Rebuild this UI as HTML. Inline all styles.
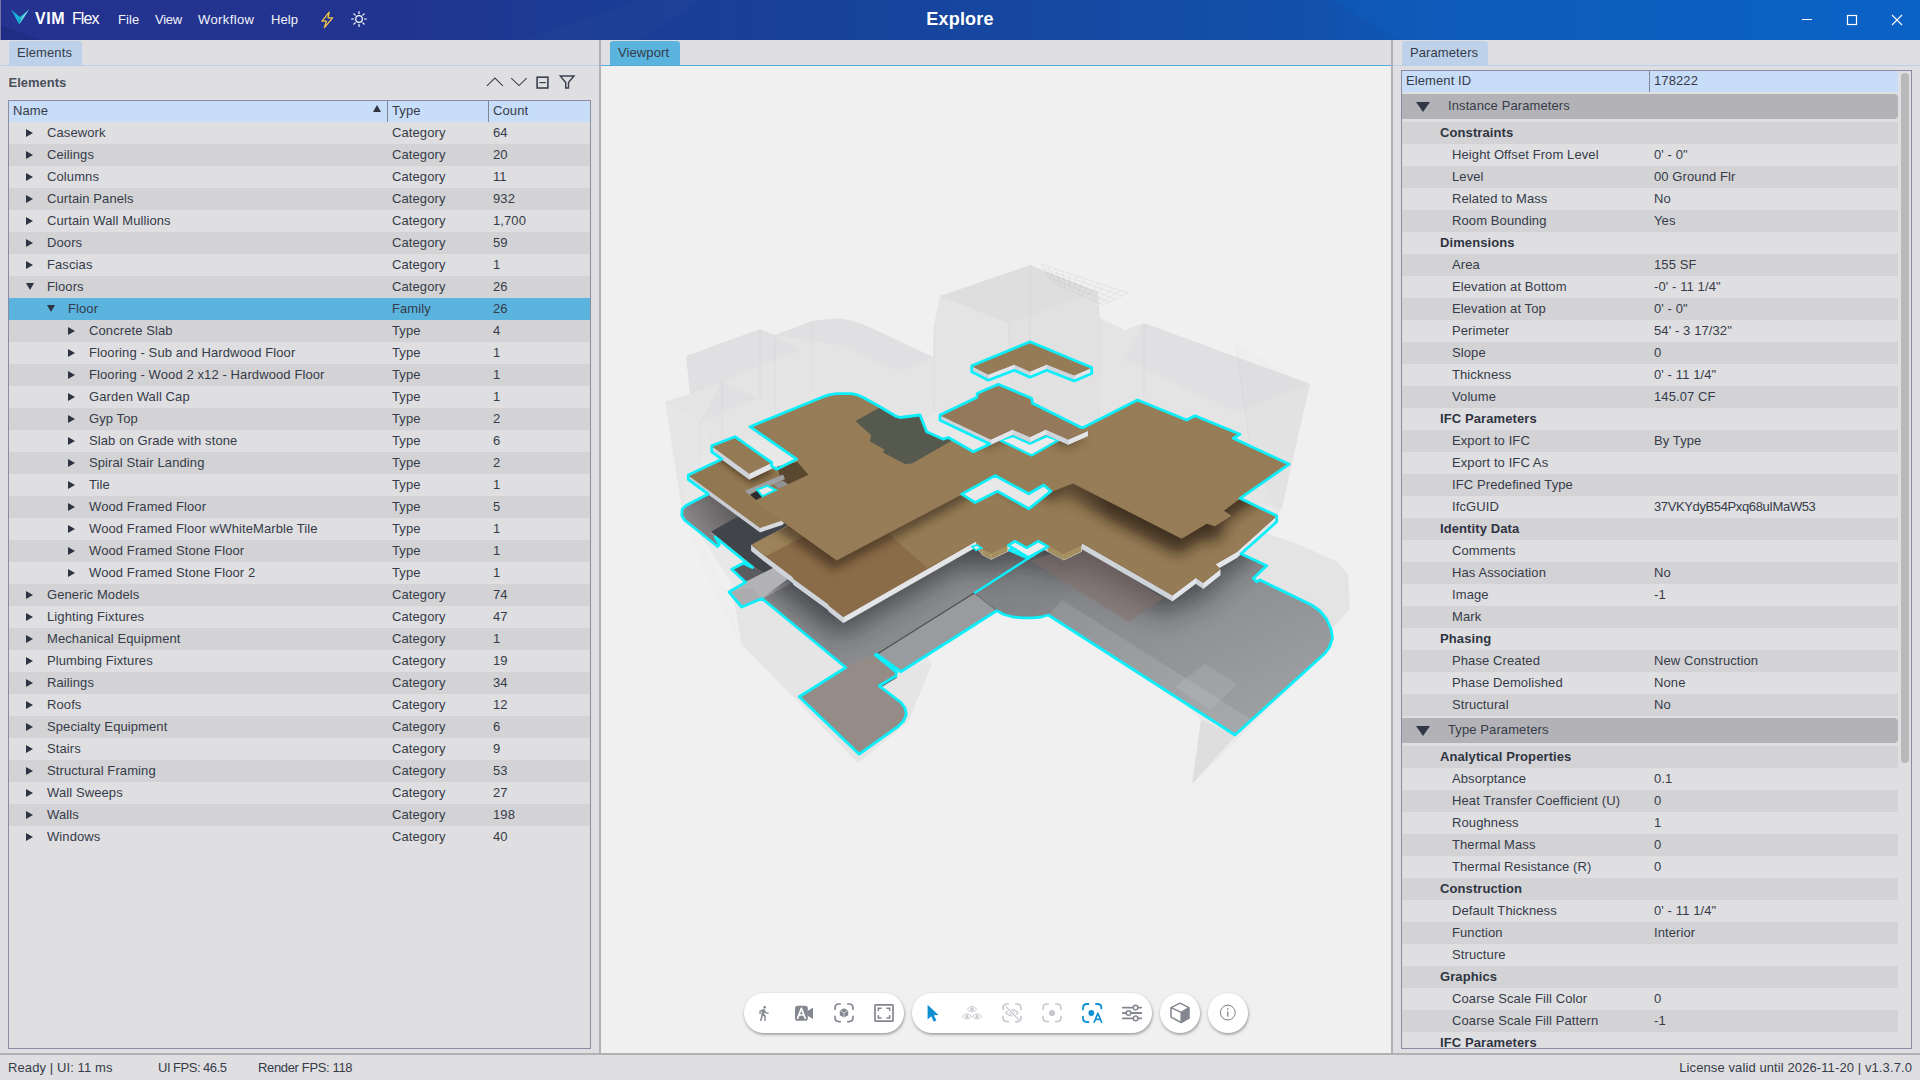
<!DOCTYPE html>
<html><head><meta charset="utf-8"><title>VIM Flex - Explore</title>
<style>
*{box-sizing:border-box;margin:0;padding:0}
html,body{width:1920px;height:1080px;overflow:hidden}
body{position:relative;background:#dfdfe1;font-family:"Liberation Sans",sans-serif;font-size:13px;color:#363b49;letter-spacing:.1px}
span{position:absolute;white-space:pre}
i,b{position:absolute;display:block}
/* title bar */
#titlebar{position:absolute;left:0;top:0;width:1920px;height:40px;overflow:hidden;background:linear-gradient(90deg,#25328f 0%,#21348f 20%,#1b3c95 31%,#17449c 47%,#154aa3 57%,#1250ab 68%,#0f58b6 74%,#0b62c5 100%);color:#fff}
#titlebar svg{position:absolute}
#titlebar .m{top:12px;font-size:13px;line-height:16px;color:#f2f4fb}
#titlebar .ttl{left:860px;width:200px;text-align:center;top:8px;font-size:18px;line-height:22px;font-weight:700;letter-spacing:.2px}
#titlebar .brand{top:8.5px;font-size:16px;line-height:20px}
/* panels */
#left{position:absolute;left:0;top:40px;width:599px;height:1013px}
#view{position:absolute;left:601px;top:40px;width:790px;height:1013px}
#right{position:absolute;left:1393px;top:40px;width:527px;height:1013px}
.split{position:absolute;top:40px;width:2px;height:1013px;background:#b0b0b5}
.tab{position:absolute;top:1px;height:24px;border-radius:3px 3px 0 0}
.tab span{top:0;line-height:23px}
.tabL{background:#bdd2ea}
.tabV{background:#5ab4de}
.tabline{position:absolute;top:25px;height:1px}
.ptitle{position:absolute;left:8.5px;top:33px;letter-spacing:0;font-weight:700;font-size:13px;line-height:20px;color:#4b505d}
/* tree */
#tree{position:absolute;left:8px;top:60px;width:583px;height:949px;border:1px solid #8b8ba4;overflow:hidden;background:#dfdfe1}
.thead{position:absolute;left:0;top:0;width:581px;height:21px;background:#c8ddf8}
.th{position:absolute;top:0;height:21px}
.th span{left:4px;top:0;line-height:20px}
.th b{left:0;top:0;width:1px;height:21px;background:#7f8595}
.sortarrow{right:6px;top:4px;width:0;height:0;border-left:4.5px solid transparent;border-right:4.5px solid transparent;border-bottom:7px solid #2f3442}
.tr{position:absolute;left:0;width:581px;height:22px}
.tr span{top:0;line-height:22px}
.tr.odd,.pr.odd{background:#d3d3d5}
.tr.sel{background:#5ab4de}
.c1{left:383px}.c2{left:484px}
.ar{top:6px;width:0;height:0}
.ar.cl{border-top:4.5px solid transparent;border-bottom:4.5px solid transparent;border-left:7.5px solid #2f3442;margin-top:.5px;margin-left:1px}
.ar.op{border-left:4.2px solid transparent;border-right:4.2px solid transparent;border-top:7.4px solid #2f3442;margin-top:1.2px;margin-left:1px}
/* viewport */
#canvas{position:absolute;left:0;top:26px;width:790px;height:987px;background:#f0f0f0;overflow:hidden}
#canvas svg.model{position:absolute;left:0;top:0}
.tbg{position:absolute;top:927px;height:40px;border-radius:20px;background:#fff;box-shadow:.5px 1.5px 3px rgba(60,60,70,.5)}
.tbg svg{position:absolute;top:0}
/* params */
#params{position:absolute;left:8px;top:30px;width:511px;height:979px;border:1px solid #8b8ba4;overflow:hidden;background:#dfdfe1}
.phead{position:absolute;left:0;top:0;width:496px;height:21px;background:#c8ddf8}
.phead span{top:0;line-height:20px}
.phead b{left:247px;top:0;width:1px;height:21px;background:#7f8595}
.sec{position:absolute;left:0;width:496px;height:25px;background:#b3b3b7;border-radius:0 4px 4px 0}
.sec span{left:46px;top:0;line-height:24px}
.tri{left:14px;top:8px;width:0;height:0;border-left:7px solid transparent;border-right:7px solid transparent;border-top:10.5px solid #333846}
.pr{position:absolute;left:0;width:496px;height:22px}
.pr span{top:0;line-height:22px}
.pr .g{left:38px;font-weight:700;color:#2f3442}
.pr .k{left:50px}
.pr .v{left:252px}
.sbar{position:absolute;left:499px;top:0;width:10px;height:977px}
.thumb{position:absolute;left:.4px;top:2px;width:7.8px;height:690px;border-radius:4px;background:#b9b9ba}
/* status */
#status{position:absolute;left:0;top:1053px;width:1920px;height:27px;border-top:2px solid #b0b0b5;background:#dfdfe1}
#status span{top:0;line-height:25px}


</style></head>
<body>
<div id="titlebar">
<svg width="1920" height="40" style="left:0;top:0"><polygon points="0,25 40,40 0,40" fill="#1b2a7e" opacity=".55"/><polygon points="520,40 640,0 700,0 640,40" fill="#ffffff" opacity=".015"/><polygon points="1330,0 1920,0 1920,40 1400,40" fill="#0a63c9" opacity=".25"/><rect x="0" y="0" width="1" height="40" fill="#7476a4"/></svg>
<svg width="20" height="17" viewBox="0 0 20 17" style="left:10px;top:9px"><defs><linearGradient id="lg1" x1="0" y1="0" x2="1" y2="1"><stop offset="0" stop-color="#1ba3d9"/><stop offset="1" stop-color="#0fc0d8"/></linearGradient><linearGradient id="lg2" x1="1" y1="0" x2="0" y2="1"><stop offset="0" stop-color="#e8fbfb"/><stop offset="1" stop-color="#37c9c4"/></linearGradient></defs><polygon points="1,0.5 10,8 9.3,15.5" fill="url(#lg1)"/><polygon points="19,0.5 10,8 9.3,15.5" fill="#1fb5cf"/><polygon points="19,0.5 12,8 9.3,15.5" fill="url(#lg2)" opacity=".85"/></svg>
<span class="brand" style="left:35px;font-weight:700;letter-spacing:.6px">VIM</span><span class="brand" style="left:72px;letter-spacing:-.9px">Flex</span>
<span class="m" style="left:118px">File</span><span class="m" style="left:155px;letter-spacing:-.25px">View</span><span class="m" style="left:198px;letter-spacing:.4px">Workflow</span><span class="m" style="left:271px">Help</span>
<svg width="16" height="18" viewBox="0 0 16 18" style="left:319px;top:11px"><path d="M10.2 1.2 L3 10.2 H7.4 L5.4 16.6 L13.6 6.8 H9 Z" fill="none" stroke="#f3c546" stroke-width="1.3" stroke-linejoin="round"/></svg>
<svg width="18" height="18" viewBox="0 0 18 18" style="left:349.5px;top:10.3px"><g stroke="#fff" stroke-width="1.2" fill="none" stroke-linecap="round"><circle cx="9" cy="9" r="3.3"/><path d="M9 1.6V3.6M9 14.4V16.4M1.6 9H3.6M14.4 9H16.4M3.8 3.8L5.2 5.2M12.8 12.8L14.2 14.2M3.8 14.2L5.2 12.8M12.8 5.2L14.2 3.8"/></g></svg>
<svg width="130" height="40" style="left:1790px;top:0"><g stroke="#fff" stroke-width="1" fill="none"><path d="M12 19.5H22"/><rect x="57.5" y="15.5" width="9" height="9" stroke-width="1.2"/><path d="M102 15L112 25M112 15L102 25" stroke-width="1.1"/></g></svg>
<span class="ttl">Explore</span>
</div>
<div id="left">
<div class="tab tabL" style="left:9px;width:73px"><span style="left:8px">Elements</span></div>
<div class="tabline" style="left:0;width:599px;background:#b9d0ec"></div>
<div class="ptitle">Elements</div>
<svg width="100" height="24" style="position:absolute;left:482px;top:30px"><g stroke="#3b404e" fill="none" stroke-linejoin="miter"><path d="M4.9 15.9L12.9 8.1L20.9 15.9" stroke-width="1.05"/><path d="M29.2 8.2L37 15.6L44.7 8.2" stroke-width="1.05"/><rect x="55.1" y="7.2" width="10.8" height="10.8" stroke-width="1.6"/><path d="M57.3 12.6H63.9" stroke-width="1.2"/><path d="M78.3 5.9H92L86.5 12.5V18H83.7V12.5Z" stroke-width="1.45"/></g></svg>

<div id="tree">
<div class="thead"><div class="th" style="left:0;width:378px"><span>Name</span><i class="sortarrow"></i></div><div class="th" style="left:378px;width:101px"><b></b><span style="left:5px">Type</span></div><div class="th" style="left:479px;width:102px"><b></b><span style="left:5px">Count</span></div></div>
<div class="tr even" style="top:21px"><i class="ar cl" style="left:16px"></i><span class="c0" style="left:38px">Casework</span><span class="c1">Category</span><span class="c2">64</span></div>
<div class="tr odd" style="top:43px"><i class="ar cl" style="left:16px"></i><span class="c0" style="left:38px">Ceilings</span><span class="c1">Category</span><span class="c2">20</span></div>
<div class="tr even" style="top:65px"><i class="ar cl" style="left:16px"></i><span class="c0" style="left:38px">Columns</span><span class="c1">Category</span><span class="c2">11</span></div>
<div class="tr odd" style="top:87px"><i class="ar cl" style="left:16px"></i><span class="c0" style="left:38px">Curtain Panels</span><span class="c1">Category</span><span class="c2">932</span></div>
<div class="tr even" style="top:109px"><i class="ar cl" style="left:16px"></i><span class="c0" style="left:38px">Curtain Wall Mullions</span><span class="c1">Category</span><span class="c2">1,700</span></div>
<div class="tr odd" style="top:131px"><i class="ar cl" style="left:16px"></i><span class="c0" style="left:38px">Doors</span><span class="c1">Category</span><span class="c2">59</span></div>
<div class="tr even" style="top:153px"><i class="ar cl" style="left:16px"></i><span class="c0" style="left:38px">Fascias</span><span class="c1">Category</span><span class="c2">1</span></div>
<div class="tr odd" style="top:175px"><i class="ar op" style="left:16px"></i><span class="c0" style="left:38px">Floors</span><span class="c1">Category</span><span class="c2">26</span></div>
<div class="tr sel" style="top:197px"><i class="ar op" style="left:37px"></i><span class="c0" style="left:59px">Floor</span><span class="c1">Family</span><span class="c2">26</span></div>
<div class="tr odd" style="top:219px"><i class="ar cl" style="left:58px"></i><span class="c0" style="left:80px">Concrete Slab</span><span class="c1">Type</span><span class="c2">4</span></div>
<div class="tr even" style="top:241px"><i class="ar cl" style="left:58px"></i><span class="c0" style="left:80px">Flooring - Sub and Hardwood Floor</span><span class="c1">Type</span><span class="c2">1</span></div>
<div class="tr odd" style="top:263px"><i class="ar cl" style="left:58px"></i><span class="c0" style="left:80px">Flooring - Wood 2 x12 - Hardwood Floor</span><span class="c1">Type</span><span class="c2">1</span></div>
<div class="tr even" style="top:285px"><i class="ar cl" style="left:58px"></i><span class="c0" style="left:80px">Garden Wall Cap</span><span class="c1">Type</span><span class="c2">1</span></div>
<div class="tr odd" style="top:307px"><i class="ar cl" style="left:58px"></i><span class="c0" style="left:80px">Gyp Top</span><span class="c1">Type</span><span class="c2">2</span></div>
<div class="tr even" style="top:329px"><i class="ar cl" style="left:58px"></i><span class="c0" style="left:80px">Slab on Grade with stone</span><span class="c1">Type</span><span class="c2">6</span></div>
<div class="tr odd" style="top:351px"><i class="ar cl" style="left:58px"></i><span class="c0" style="left:80px">Spiral Stair Landing</span><span class="c1">Type</span><span class="c2">2</span></div>
<div class="tr even" style="top:373px"><i class="ar cl" style="left:58px"></i><span class="c0" style="left:80px">Tile</span><span class="c1">Type</span><span class="c2">1</span></div>
<div class="tr odd" style="top:395px"><i class="ar cl" style="left:58px"></i><span class="c0" style="left:80px">Wood Framed Floor</span><span class="c1">Type</span><span class="c2">5</span></div>
<div class="tr even" style="top:417px"><i class="ar cl" style="left:58px"></i><span class="c0" style="left:80px">Wood Framed Floor wWhiteMarble Tile</span><span class="c1">Type</span><span class="c2">1</span></div>
<div class="tr odd" style="top:439px"><i class="ar cl" style="left:58px"></i><span class="c0" style="left:80px">Wood Framed Stone Floor</span><span class="c1">Type</span><span class="c2">1</span></div>
<div class="tr even" style="top:461px"><i class="ar cl" style="left:58px"></i><span class="c0" style="left:80px">Wood Framed Stone Floor 2</span><span class="c1">Type</span><span class="c2">1</span></div>
<div class="tr odd" style="top:483px"><i class="ar cl" style="left:16px"></i><span class="c0" style="left:38px">Generic Models</span><span class="c1">Category</span><span class="c2">74</span></div>
<div class="tr even" style="top:505px"><i class="ar cl" style="left:16px"></i><span class="c0" style="left:38px">Lighting Fixtures</span><span class="c1">Category</span><span class="c2">47</span></div>
<div class="tr odd" style="top:527px"><i class="ar cl" style="left:16px"></i><span class="c0" style="left:38px">Mechanical Equipment</span><span class="c1">Category</span><span class="c2">1</span></div>
<div class="tr even" style="top:549px"><i class="ar cl" style="left:16px"></i><span class="c0" style="left:38px">Plumbing Fixtures</span><span class="c1">Category</span><span class="c2">19</span></div>
<div class="tr odd" style="top:571px"><i class="ar cl" style="left:16px"></i><span class="c0" style="left:38px">Railings</span><span class="c1">Category</span><span class="c2">34</span></div>
<div class="tr even" style="top:593px"><i class="ar cl" style="left:16px"></i><span class="c0" style="left:38px">Roofs</span><span class="c1">Category</span><span class="c2">12</span></div>
<div class="tr odd" style="top:615px"><i class="ar cl" style="left:16px"></i><span class="c0" style="left:38px">Specialty Equipment</span><span class="c1">Category</span><span class="c2">6</span></div>
<div class="tr even" style="top:637px"><i class="ar cl" style="left:16px"></i><span class="c0" style="left:38px">Stairs</span><span class="c1">Category</span><span class="c2">9</span></div>
<div class="tr odd" style="top:659px"><i class="ar cl" style="left:16px"></i><span class="c0" style="left:38px">Structural Framing</span><span class="c1">Category</span><span class="c2">53</span></div>
<div class="tr even" style="top:681px"><i class="ar cl" style="left:16px"></i><span class="c0" style="left:38px">Wall Sweeps</span><span class="c1">Category</span><span class="c2">27</span></div>
<div class="tr odd" style="top:703px"><i class="ar cl" style="left:16px"></i><span class="c0" style="left:38px">Walls</span><span class="c1">Category</span><span class="c2">198</span></div>
<div class="tr even" style="top:725px"><i class="ar cl" style="left:16px"></i><span class="c0" style="left:38px">Windows</span><span class="c1">Category</span><span class="c2">40</span></div>
</div></div><div class="split" style="left:599px"></div><div id="view">
<div class="tab tabV" style="left:9px;width:70px"><span style="left:8px">Viewport</span></div>
<div class="tabline" style="left:0;width:790px;background:#4fabd9"></div>
<div id="canvas">
<svg class="model" width="790" height="987" viewBox="601 66 790 987">
<defs>
<linearGradient id="gmR" gradientUnits="userSpaceOnUse" x1="1045" y1="0" x2="1110" y2="0"><stop offset="0" stop-color="#000"/><stop offset="1" stop-color="#fff"/></linearGradient><linearGradient id="gmL" gradientUnits="userSpaceOnUse" x1="1045" y1="0" x2="1110" y2="0"><stop offset="0" stop-color="#fff"/><stop offset="1" stop-color="#000"/></linearGradient><mask id="mRt" maskUnits="userSpaceOnUse" x="600" y="300" width="800" height="500"><rect x="600" y="300" width="800" height="500" fill="url(#gmR)"/></mask><mask id="mLt" maskUnits="userSpaceOnUse" x="600" y="300" width="800" height="500"><rect x="600" y="300" width="800" height="500" fill="url(#gmL)"/></mask>
<linearGradient id="gR8" gradientUnits="userSpaceOnUse" x1="1150" y1="540" x2="1230" y2="720"><stop offset="0" stop-color="#808285"/><stop offset=".4" stop-color="#8d8f92"/><stop offset="1" stop-color="#9c9ea1"/></linearGradient>
<linearGradient id="gR1" gradientUnits="userSpaceOnUse" x1="730" y1="505" x2="695" y2="530"><stop offset="0" stop-color="#5f5c5d"/><stop offset="1" stop-color="#8b8788"/></linearGradient>
<filter id="b3" x="-30%" y="-30%" width="160%" height="160%"><feGaussianBlur stdDeviation="3"/></filter><filter id="b4" x="-30%" y="-30%" width="160%" height="160%"><feGaussianBlur stdDeviation="4"/></filter><filter id="b5" x="-30%" y="-30%" width="160%" height="160%"><feGaussianBlur stdDeviation="5"/></filter><filter id="b7" x="-30%" y="-30%" width="160%" height="160%"><feGaussianBlur stdDeviation="7"/></filter><filter id="b14" x="-30%" y="-30%" width="160%" height="160%"><feGaussianBlur stdDeviation="14"/></filter><clipPath id="cG"><polygon points="761.7,598.3 845.8,667.5 876.7,654.2 975.0,592.5 1028.5,558.5 940.0,520.0 800.0,570.0"/><polygon points="876.7,654.2 900.8,671.7 996.7,610.8 974.2,593.3"/><polygon points="974.2,593.3 1047.5,546.0 1100.0,520.0 1236.7,551.7 1266.7,565.8 1253.3,578.3 1256.7,581.7 1260.0,580.0 1311.7,605.0 1320.0,611.0 1326.5,619.0 1331.0,629.0 1332.5,638.0 1329.5,647.0 1325.0,653.3 1235.0,735.0 1048.3,615.0 1041.0,617.0 1033.0,617.8 1023.0,617.8 1013.0,617.0 1004.0,614.5 996.7,610.8"/><polygon points="845.8,667.5 799.2,696.7 859.2,754.2 898.0,726.5 903.5,721.0 906.3,714.5 905.0,708.0 901.0,702.5 879.2,685.8 895.8,676.0 896.6,672.4 875.3,654.8"/></clipPath><clipPath id="cF1"><polygon points="751.7,545.0 786.7,526.7 800.0,520.0 961.3,493.8 975.0,502.5 997.5,491.3 1028.8,508.8 1051.3,491.0 1120.0,460.0 1240.0,498.3 1276.7,515.8 1236.7,551.7 1215.0,564.2 1220.0,569.2 1203.3,582.5 1195.8,577.5 1172.5,595.0 1081.3,542.5 1081.3,545.5 1063.8,554.0 1047.5,545.3 1038.8,540.6 1027.5,547.5 1014.4,541.3 1007.5,545.5 991.3,553.3 982.5,549.0 976.0,541.0 843.3,616.7 829.2,605.6 828.5,604.0 794.0,578.9 792.8,576.8 763.5,554.5"/></clipPath><clipPath id="cSA"><polygon points="688.3,475.0 721.7,459.2 745.0,468.0 771.7,466.0 776.7,469.2 796.7,459.2 812.0,476.0 782.5,520.0 760.0,527.5"/></clipPath><clipPath id="cF2"><polygon points="750.0,426.7 823.3,396.7 830.0,394.6 836.7,393.7 851.7,393.7 858.0,395.2 863.3,397.5 880.0,406.7 895.0,415.8 900.0,417.5 920.0,415.0 926.7,431.7 943.3,439.2 948.3,437.5 973.3,451.7 1000.0,439.2 1040.0,425.0 1083.3,427.5 1137.5,400.0 1186.7,420.0 1195.0,415.8 1240.0,434.2 1233.3,438.3 1289.2,464.2 1240.0,498.3 1223.3,510.8 1230.8,515.8 1215.0,525.8 1206.7,523.3 1181.7,538.3 1073.0,483.0 1051.3,491.5 1043.8,485.0 1028.8,493.8 995.0,475.6 960.0,495.0 836.7,560.0 755.0,501.7 775.0,490.8 809.2,475.0 798.3,462.5 796.7,459.2"/></clipPath><clipPath id="cRt"><polygon points="1062.0,400.0 1400.0,400.0 1400.0,700.0 1062.0,700.0"/></clipPath><clipPath id="cLt"><polygon points="600.0,400.0 1062.0,400.0 1062.0,700.0 600.0,700.0"/></clipPath></defs>
<g><polygon points="665.0,402.0 690.0,394.0 686.0,356.0 760.0,329.0 775.0,335.0 812.0,321.0 826.0,319.0 840.0,318.5 853.0,320.5 865.0,325.0 933.0,357.0 934.0,325.0 940.0,296.0 1030.0,265.0 1098.0,292.0 1100.0,318.0 1125.0,330.0 1144.0,323.0 1310.0,384.0 1282.0,508.0 1264.0,532.0 1300.0,545.0 1338.0,562.0 1348.0,575.0 1350.0,609.0 1192.0,784.0 1201.0,720.0 1150.0,670.0 1100.0,630.0 1040.0,590.0 900.0,600.0 932.0,664.0 908.0,722.0 858.0,763.0 742.0,645.0 730.0,580.0 690.0,520.0 682.0,510.0" fill="#46464f" opacity="0.045"/><polygon points="665.0,402.0 722.0,381.0 758.0,398.0 700.0,422.0" fill="#46464f" opacity="0.02"/><polygon points="665.0,402.0 700.0,422.0 712.0,447.0 688.0,475.0 683.0,508.0 682.0,516.0 698.0,536.0 729.0,598.0 742.0,650.0 700.0,560.0 682.0,510.0" fill="#46464f" opacity="0.012"/><polygon points="686.0,356.0 760.0,329.0 775.0,335.0 812.0,321.0 826.0,319.0 840.0,318.5 853.0,320.5 865.0,325.0 933.0,357.0 934.0,412.0 900.0,440.0 750.0,440.0 712.0,446.0 700.0,422.0 722.0,381.0 690.0,394.0" fill="#46464f" opacity="0.02"/><polygon points="686.0,356.0 760.0,329.0 800.0,350.0 722.0,381.0 690.0,394.0" fill="#46464f" opacity="0.02"/><polygon points="775.0,335.0 812.0,321.0 840.0,318.5 865.0,325.0 933.0,357.0 900.0,372.0 840.0,345.0" fill="#46464f" opacity="0.02"/><polygon points="940.0,296.0 1030.0,265.0 1098.0,292.0 1100.0,318.0 1125.0,330.0 1125.0,420.0 1000.0,440.0 940.0,415.0 934.0,412.0 934.0,325.0" fill="#46464f" opacity="0.025"/><polygon points="940.0,296.0 1030.0,265.0 1098.0,292.0 1008.0,323.0" fill="#46464f" opacity="0.03"/><polygon points="1008.0,323.0 1098.0,292.0 1100.0,318.0 1100.0,420.0 1010.0,420.0" fill="#46464f" opacity="0.015"/><polygon points="1125.0,330.0 1144.0,323.0 1310.0,384.0 1297.0,440.0 1282.0,508.0 1240.0,500.0 1125.0,420.0" fill="#46464f" opacity="0.02"/><polygon points="1144.0,323.0 1310.0,384.0 1236.0,412.0 1125.0,360.0" fill="#46464f" opacity="0.02"/><polygon points="1236.0,345.0 1310.0,384.0 1282.0,508.0 1277.0,516.0 1250.0,447.0" fill="#46464f" opacity="0.012"/><polygon points="1264.0,532.0 1300.0,545.0 1338.0,562.0 1348.0,575.0 1350.0,609.0 1192.0,784.0 1201.0,720.0 1235.0,735.0 1325.0,653.0 1332.0,636.0 1312.0,605.0 1260.0,580.0 1253.0,578.0 1267.0,566.0 1237.0,552.0 1277.0,516.0 1282.0,508.0" fill="#46464f" opacity="0.02"/><polygon points="1201.0,720.0 1235.0,735.0 1325.0,653.0 1340.0,640.0 1192.0,784.0" fill="#46464f" opacity="0.03"/><polygon points="730.0,580.0 742.0,645.0 858.0,763.0 908.0,722.0 932.0,664.0 846.0,668.0 762.0,598.0 742.0,607.0 729.0,592.0" fill="#46464f" opacity="0.015"/><line x1="1041.0" y1="264.0" x2="1052.0" y2="282.0" stroke="#40404a" stroke-width=".7" opacity=".09"/><line x1="1048.2" y1="266.4" x2="1056.2" y2="283.9" stroke="#40404a" stroke-width=".7" opacity=".09"/><line x1="1055.5" y1="268.8" x2="1060.5" y2="285.8" stroke="#40404a" stroke-width=".7" opacity=".09"/><line x1="1062.8" y1="271.2" x2="1064.8" y2="287.8" stroke="#40404a" stroke-width=".7" opacity=".09"/><line x1="1070.0" y1="273.7" x2="1069.0" y2="289.7" stroke="#40404a" stroke-width=".7" opacity=".09"/><line x1="1077.2" y1="276.1" x2="1073.2" y2="291.6" stroke="#40404a" stroke-width=".7" opacity=".09"/><line x1="1084.5" y1="278.5" x2="1077.5" y2="293.5" stroke="#40404a" stroke-width=".7" opacity=".09"/><line x1="1091.8" y1="280.9" x2="1081.8" y2="295.4" stroke="#40404a" stroke-width=".7" opacity=".09"/><line x1="1099.0" y1="283.3" x2="1086.0" y2="297.3" stroke="#40404a" stroke-width=".7" opacity=".09"/><line x1="1106.2" y1="285.8" x2="1090.2" y2="299.2" stroke="#40404a" stroke-width=".7" opacity=".09"/><line x1="1113.5" y1="288.2" x2="1094.5" y2="301.2" stroke="#40404a" stroke-width=".7" opacity=".09"/><line x1="1120.8" y1="290.6" x2="1098.8" y2="303.1" stroke="#40404a" stroke-width=".7" opacity=".09"/><line x1="1128.0" y1="293.0" x2="1103.0" y2="305.0" stroke="#40404a" stroke-width=".7" opacity=".09"/><line x1="1041.0" y1="264.0" x2="1128.0" y2="293.0" stroke="#40404a" stroke-width=".7" opacity=".09"/><line x1="1043.8" y1="268.5" x2="1121.8" y2="296.0" stroke="#40404a" stroke-width=".7" opacity=".09"/><line x1="1046.5" y1="273.0" x2="1115.5" y2="299.0" stroke="#40404a" stroke-width=".7" opacity=".09"/><line x1="1049.2" y1="277.5" x2="1109.2" y2="302.0" stroke="#40404a" stroke-width=".7" opacity=".09"/><line x1="1052.0" y1="282.0" x2="1103.0" y2="305.0" stroke="#40404a" stroke-width=".7" opacity=".09"/><line x1="722" y1="381" x2="722" y2="440" stroke="#40404a" stroke-width=".8" opacity=".05"/><line x1="760" y1="329" x2="760" y2="400" stroke="#40404a" stroke-width=".8" opacity=".05"/><line x1="812" y1="321" x2="812" y2="392" stroke="#40404a" stroke-width=".8" opacity=".05"/><line x1="934" y1="325" x2="934" y2="410" stroke="#40404a" stroke-width=".8" opacity=".05"/><line x1="1030" y1="265" x2="1030" y2="340" stroke="#40404a" stroke-width=".8" opacity=".05"/><line x1="1100" y1="318" x2="1100" y2="372" stroke="#40404a" stroke-width=".8" opacity=".05"/><line x1="1144" y1="323" x2="1144" y2="398" stroke="#40404a" stroke-width=".8" opacity=".05"/><line x1="1236" y1="345" x2="1250" y2="447" stroke="#40404a" stroke-width=".8" opacity=".05"/><line x1="775" y1="335" x2="775" y2="415" stroke="#40404a" stroke-width=".8" opacity=".05"/><line x1="700" y1="422" x2="700" y2="470" stroke="#40404a" stroke-width=".8" opacity=".05"/><line x1="1008" y1="323" x2="1010" y2="349" stroke="#40404a" stroke-width=".8" opacity=".05"/></g>
<g><polygon points="686.0,507.0 709.5,495.0 742.0,518.5 712.0,533.5 719.0,545.0 717.5,546.5 684.5,520.0 681.8,515.5 682.2,510.5" fill="#5c595a" /><polygon points="686.0,505.5 709.5,493.5 709.5,495.0 686.0,507.0" fill="#6a6768" stroke="#6a6768" stroke-width=".6"/><polygon points="709.5,493.5 742.0,517.0 742.0,518.5 709.5,495.0" fill="#5c595a" stroke="#5c595a" stroke-width=".6"/><polygon points="742.0,517.0 712.0,532.0 712.0,533.5 742.0,518.5" fill="#6a6768" stroke="#6a6768" stroke-width=".6"/><polygon points="712.0,532.0 719.0,543.5 719.0,545.0 712.0,533.5" fill="#5c595a" stroke="#5c595a" stroke-width=".6"/><polygon points="719.0,543.5 717.5,545.0 717.5,546.5 719.0,545.0" fill="#6a6768" stroke="#6a6768" stroke-width=".6"/><polygon points="717.5,545.0 684.5,518.5 684.5,520.0 717.5,546.5" fill="#5c595a" stroke="#5c595a" stroke-width=".6"/><polygon points="684.5,518.5 681.8,514.0 681.8,515.5 684.5,520.0" fill="#5c595a" stroke="#5c595a" stroke-width=".6"/><polygon points="681.8,514.0 682.2,509.0 682.2,510.5 681.8,515.5" fill="#6a6768" stroke="#6a6768" stroke-width=".6"/><polygon points="682.2,509.0 686.0,505.5 686.0,507.0 682.2,510.5" fill="#6a6768" stroke="#6a6768" stroke-width=".6"/><polygon points="686.0,505.5 709.5,493.5 742.0,517.0 712.0,532.0 719.0,543.5 717.5,545.0 684.5,518.5 681.8,514.0 682.2,509.0" fill="url(#gR1)"  stroke="url(#gR1)" stroke-width="1"/><polygon points="711.7,534.2 736.7,520.0 790.0,510.5 810.0,547.5 775.0,580.5 757.0,571.0" fill="#8d8f93" /><polygon points="711.7,531.7 736.7,517.5 736.7,520.0 711.7,534.2" fill="#9a9c9f" stroke="#9a9c9f" stroke-width=".6"/><polygon points="736.7,517.5 790.0,508.0 790.0,510.5 736.7,520.0" fill="#9a9c9f" stroke="#9a9c9f" stroke-width=".6"/><polygon points="790.0,508.0 810.0,545.0 810.0,547.5 790.0,510.5" fill="#8d8f93" stroke="#8d8f93" stroke-width=".6"/><polygon points="810.0,545.0 775.0,578.0 775.0,580.5 810.0,547.5" fill="#9a9c9f" stroke="#9a9c9f" stroke-width=".6"/><polygon points="775.0,578.0 757.0,568.5 757.0,571.0 775.0,580.5" fill="#8d8f93" stroke="#8d8f93" stroke-width=".6"/><polygon points="757.0,568.5 711.7,531.7 711.7,534.2 757.0,571.0" fill="#8d8f93" stroke="#8d8f93" stroke-width=".6"/><polygon points="711.7,531.7 736.7,517.5 790.0,508.0 810.0,545.0 775.0,578.0 757.0,568.5" fill="#414448"  stroke="#414448" stroke-width="1"/><polygon points="731.7,569.2 743.3,563.3 800.0,590.0 760.0,590.0 745.0,581.7" fill="#5a5c5f"  stroke="#5a5c5f" stroke-width="1"/><polygon points="761.7,598.3 845.8,667.5 876.7,654.2 975.0,592.5 1028.5,558.5 940.0,520.0 800.0,570.0" fill="#8a8c8f"  stroke="#8a8c8f" stroke-width="1"/><polygon points="876.7,654.2 900.8,671.7 996.7,610.8 974.2,593.3" fill="#999b9e"  stroke="#999b9e" stroke-width="1"/><polygon points="974.2,593.3 1047.5,546.0 1100.0,520.0 1236.7,551.7 1266.7,565.8 1253.3,578.3 1256.7,581.7 1260.0,580.0 1311.7,605.0 1320.0,611.0 1326.5,619.0 1331.0,629.0 1332.5,638.0 1329.5,647.0 1325.0,653.3 1235.0,735.0 1048.3,615.0 1041.0,617.0 1033.0,617.8 1023.0,617.8 1013.0,617.0 1004.0,614.5 996.7,610.8" fill="url(#gR8)"  stroke="url(#gR8)" stroke-width="1"/><polygon points="729.0,592.0 745.0,582.5 778.0,566.0 800.0,578.0 762.0,598.5 741.7,607.0" fill="#b3b3b6"  stroke="#b3b3b6" stroke-width="1"/><polygon points="845.8,667.5 799.2,696.7 859.2,754.2 898.0,726.5 903.5,721.0 906.3,714.5 905.0,708.0 901.0,702.5 879.2,685.8 895.8,676.0 896.6,672.4 875.3,654.8" fill="#958b87"  stroke="#958b87" stroke-width="1"/><g clip-path="url(#cG)"><polygon points="745.7,565.0 780.7,546.7 794.0,540.0 955.3,513.8 969.0,522.5 991.5,511.3 1022.8,528.8 1045.3,511.0 1114.0,480.0 1234.0,518.3 1270.7,535.8 1230.7,571.7 1209.0,584.2 1214.0,589.2 1197.3,602.5 1189.8,597.5 1166.5,615.0 1075.3,562.5 1075.3,565.5 1057.8,574.0 1041.5,565.3 1032.8,560.6 1021.5,567.5 1008.4,561.3 1001.5,565.5 985.3,573.3 976.5,569.0 970.0,561.0 837.3,636.7 823.2,625.6 822.5,624.0 788.0,598.9 786.8,596.8 757.5,574.5" fill="#26282c" opacity="0.66" filter="url(#b14)"/></g><polygon points="1030.0,560.5 1080.0,545.0 1163.3,598.3 1128.3,621.7" fill="#84706a" opacity=".5"/><polygon points="1205.0,664.0 1237.5,684.0 1210.0,710.0 1175.0,686.7" fill="#b4b5b8" opacity=".34"/><polygon points="1048.3,615.0 1235.0,735.0 1252.0,720.0 1062.0,600.0" fill="#ffffff" opacity=".10"/><polyline points="876.7,654.2 975.0,592.5" fill="none" stroke="#4d4e50" stroke-width="1.3"/><polyline points="975.0,593.5 997.0,611.0" fill="none" stroke="#6b6c6f" stroke-width="1"/><polyline points="879.5,687.2 896.5,677.0" fill="none" stroke="#5a5553" stroke-width="2"/><polyline points="974.2,593.3 1047.5,546.0" fill="none" stroke="#0ceefa" stroke-width="2.4"/><polygon points="729.0,592.0 741.7,607.0 762.0,598.5 752.0,588.0" fill="#a6a6a9" opacity=".6"/><polygon points="688.3,479.5 721.7,463.7 745.0,472.5 771.7,470.5 776.7,473.7 796.7,463.7 812.0,480.5 782.5,524.5 760.0,532.0" fill="#c9ccd3" /><polygon points="688.3,475.0 721.7,459.2 721.7,463.7 688.3,479.5" fill="#d9dbdf" stroke="#d9dbdf" stroke-width=".6"/><polygon points="721.7,459.2 745.0,468.0 745.0,472.5 721.7,463.7" fill="#c9ccd3" stroke="#c9ccd3" stroke-width=".6"/><polygon points="745.0,468.0 771.7,466.0 771.7,470.5 745.0,472.5" fill="#d9dbdf" stroke="#d9dbdf" stroke-width=".6"/><polygon points="771.7,466.0 776.7,469.2 776.7,473.7 771.7,470.5" fill="#c9ccd3" stroke="#c9ccd3" stroke-width=".6"/><polygon points="776.7,469.2 796.7,459.2 796.7,463.7 776.7,473.7" fill="#d9dbdf" stroke="#d9dbdf" stroke-width=".6"/><polygon points="796.7,459.2 812.0,476.0 812.0,480.5 796.7,463.7" fill="#c9ccd3" stroke="#c9ccd3" stroke-width=".6"/><polygon points="812.0,476.0 782.5,520.0 782.5,524.5 812.0,480.5" fill="#d9dbdf" stroke="#d9dbdf" stroke-width=".6"/><polygon points="782.5,520.0 760.0,527.5 760.0,532.0 782.5,524.5" fill="#d9dbdf" stroke="#d9dbdf" stroke-width=".6"/><polygon points="760.0,527.5 688.3,475.0 688.3,479.5 760.0,532.0" fill="#c9ccd3" stroke="#c9ccd3" stroke-width=".6"/><polygon points="688.3,475.0 721.7,459.2 745.0,468.0 771.7,466.0 776.7,469.2 796.7,459.2 812.0,476.0 782.5,520.0 760.0,527.5" fill="#927852"  stroke="#927852" stroke-width="1"/><g clip-path="url(#cSA)"><polygon points="713.7,455.8 737.0,446.7 773.7,472.5 751.2,483.3" fill="#2a1e10" opacity="0.6" filter="url(#b3)"/></g><polygon points="777.0,466.5 798.3,461.7 809.5,475.0 785.0,487.0 781.0,480.0" fill="#5a4730" /><polygon points="745.0,490.8 783.0,474.5 785.0,479.0 768.0,486.5 757.0,490.0 750.0,495.5" fill="#9fa0a3" /><polygon points="774.0,484.5 783.0,480.5 789.5,485.5 780.0,490.5" fill="#909193" /><polygon points="750.0,494.5 757.0,491.0 763.0,496.5 756.0,500.0" fill="#2b2c2e" /><polygon points="751.7,551.0 786.7,532.7 800.0,526.0 961.3,499.8 975.0,508.5 997.5,497.3 1028.8,514.8 1051.3,497.0 1120.0,466.0 1240.0,504.3 1276.7,521.8 1236.7,557.7 1215.0,570.2 1220.0,575.2 1203.3,588.5 1195.8,583.5 1172.5,601.0 1081.3,548.5 1081.3,551.5 1063.8,560.0 1047.5,551.3 1038.8,546.6 1027.5,553.5 1014.4,547.3 1007.5,551.5 991.3,559.3 982.5,555.0 976.0,547.0 843.3,622.7 829.2,611.6 828.5,610.0 794.0,584.9 792.8,582.8 763.5,560.5" fill="#cfd3da" /><polygon points="751.7,545.0 786.7,526.7 786.7,532.7 751.7,551.0" fill="#e3e5e9" stroke="#e3e5e9" stroke-width=".6"/><polygon points="786.7,526.7 800.0,520.0 800.0,526.0 786.7,532.7" fill="#e3e5e9" stroke="#e3e5e9" stroke-width=".6"/><polygon points="800.0,520.0 961.3,493.8 961.3,499.8 800.0,526.0" fill="#e3e5e9" stroke="#e3e5e9" stroke-width=".6"/><polygon points="961.3,493.8 975.0,502.5 975.0,508.5 961.3,499.8" fill="#cfd3da" stroke="#cfd3da" stroke-width=".6"/><polygon points="975.0,502.5 997.5,491.3 997.5,497.3 975.0,508.5" fill="#e3e5e9" stroke="#e3e5e9" stroke-width=".6"/><polygon points="997.5,491.3 1028.8,508.8 1028.8,514.8 997.5,497.3" fill="#cfd3da" stroke="#cfd3da" stroke-width=".6"/><polygon points="1028.8,508.8 1051.3,491.0 1051.3,497.0 1028.8,514.8" fill="#e3e5e9" stroke="#e3e5e9" stroke-width=".6"/><polygon points="1051.3,491.0 1120.0,460.0 1120.0,466.0 1051.3,497.0" fill="#e3e5e9" stroke="#e3e5e9" stroke-width=".6"/><polygon points="1120.0,460.0 1240.0,498.3 1240.0,504.3 1120.0,466.0" fill="#cfd3da" stroke="#cfd3da" stroke-width=".6"/><polygon points="1240.0,498.3 1276.7,515.8 1276.7,521.8 1240.0,504.3" fill="#cfd3da" stroke="#cfd3da" stroke-width=".6"/><polygon points="1276.7,515.8 1236.7,551.7 1236.7,557.7 1276.7,521.8" fill="#e3e5e9" stroke="#e3e5e9" stroke-width=".6"/><polygon points="1236.7,551.7 1215.0,564.2 1215.0,570.2 1236.7,557.7" fill="#e3e5e9" stroke="#e3e5e9" stroke-width=".6"/><polygon points="1215.0,564.2 1220.0,569.2 1220.0,575.2 1215.0,570.2" fill="#cfd3da" stroke="#cfd3da" stroke-width=".6"/><polygon points="1220.0,569.2 1203.3,582.5 1203.3,588.5 1220.0,575.2" fill="#e3e5e9" stroke="#e3e5e9" stroke-width=".6"/><polygon points="1203.3,582.5 1195.8,577.5 1195.8,583.5 1203.3,588.5" fill="#cfd3da" stroke="#cfd3da" stroke-width=".6"/><polygon points="1195.8,577.5 1172.5,595.0 1172.5,601.0 1195.8,583.5" fill="#e3e5e9" stroke="#e3e5e9" stroke-width=".6"/><polygon points="1172.5,595.0 1081.3,542.5 1081.3,548.5 1172.5,601.0" fill="#cfd3da" stroke="#cfd3da" stroke-width=".6"/><polygon points="1081.3,542.5 1081.3,545.5 1081.3,551.5 1081.3,548.5" fill="#cfd3da" stroke="#cfd3da" stroke-width=".6"/><polygon points="1081.3,545.5 1063.8,554.0 1063.8,560.0 1081.3,551.5" fill="#e3e5e9" stroke="#e3e5e9" stroke-width=".6"/><polygon points="1063.8,554.0 1047.5,545.3 1047.5,551.3 1063.8,560.0" fill="#cfd3da" stroke="#cfd3da" stroke-width=".6"/><polygon points="1047.5,545.3 1038.8,540.6 1038.8,546.6 1047.5,551.3" fill="#cfd3da" stroke="#cfd3da" stroke-width=".6"/><polygon points="1038.8,540.6 1027.5,547.5 1027.5,553.5 1038.8,546.6" fill="#e3e5e9" stroke="#e3e5e9" stroke-width=".6"/><polygon points="1027.5,547.5 1014.4,541.3 1014.4,547.3 1027.5,553.5" fill="#cfd3da" stroke="#cfd3da" stroke-width=".6"/><polygon points="1014.4,541.3 1007.5,545.5 1007.5,551.5 1014.4,547.3" fill="#e3e5e9" stroke="#e3e5e9" stroke-width=".6"/><polygon points="1007.5,545.5 991.3,553.3 991.3,559.3 1007.5,551.5" fill="#e3e5e9" stroke="#e3e5e9" stroke-width=".6"/><polygon points="991.3,553.3 982.5,549.0 982.5,555.0 991.3,559.3" fill="#cfd3da" stroke="#cfd3da" stroke-width=".6"/><polygon points="982.5,549.0 976.0,541.0 976.0,547.0 982.5,555.0" fill="#cfd3da" stroke="#cfd3da" stroke-width=".6"/><polygon points="976.0,541.0 843.3,616.7 843.3,622.7 976.0,547.0" fill="#e3e5e9" stroke="#e3e5e9" stroke-width=".6"/><polygon points="843.3,616.7 829.2,605.6 829.2,611.6 843.3,622.7" fill="#cfd3da" stroke="#cfd3da" stroke-width=".6"/><polygon points="829.2,605.6 828.5,604.0 828.5,610.0 829.2,611.6" fill="#cfd3da" stroke="#cfd3da" stroke-width=".6"/><polygon points="828.5,604.0 794.0,578.9 794.0,584.9 828.5,610.0" fill="#cfd3da" stroke="#cfd3da" stroke-width=".6"/><polygon points="794.0,578.9 792.8,576.8 792.8,582.8 794.0,584.9" fill="#cfd3da" stroke="#cfd3da" stroke-width=".6"/><polygon points="792.8,576.8 763.5,554.5 763.5,560.5 792.8,582.8" fill="#cfd3da" stroke="#cfd3da" stroke-width=".6"/><polygon points="763.5,554.5 751.7,545.0 751.7,551.0 763.5,560.5" fill="#cfd3da" stroke="#cfd3da" stroke-width=".6"/><polygon points="751.7,545.0 786.7,526.7 800.0,520.0 961.3,493.8 975.0,502.5 997.5,491.3 1028.8,508.8 1051.3,491.0 1120.0,460.0 1240.0,498.3 1276.7,515.8 1236.7,551.7 1215.0,564.2 1220.0,569.2 1203.3,582.5 1195.8,577.5 1172.5,595.0 1081.3,542.5 1081.3,545.5 1063.8,554.0 1047.5,545.3 1038.8,540.6 1027.5,547.5 1014.4,541.3 1007.5,545.5 991.3,553.3 982.5,549.0 976.0,541.0 843.3,616.7 829.2,605.6 828.5,604.0 794.0,578.9 792.8,576.8 763.5,554.5" fill="#8b6c48"  stroke="#8b6c48" stroke-width="1"/><polygon points="751.7,545.0 786.7,526.7 805.0,536.0 766.0,556.0" fill="#9c835a" /><polygon points="885.0,530.0 927.0,568.0 976.0,541.0 982.5,549.0 991.3,553.3 1007.5,545.5 1014.4,541.3 1027.5,547.5 1038.8,540.6 1047.5,545.3 1063.8,554.0 1081.3,545.5 1081.3,542.5 1172.5,595.0 1195.8,577.5 1203.3,582.5 1220.0,569.2 1215.0,564.2 1236.7,551.7 1276.7,515.8 1240.0,498.3 1120.0,470.0 1051.3,491.0 1028.8,508.8 997.5,491.3 975.0,502.5 961.3,493.8" fill="#967c56" /><g mask="url(#mRt)"><g clip-path="url(#cF1)"><polygon points="746.0,442.7 819.3,412.7 826.0,410.6 832.7,409.7 847.7,409.7 854.0,411.2 859.3,413.5 876.0,422.7 891.0,431.8 896.0,433.5 916.0,431.0 922.7,447.7 939.3,455.2 944.3,453.5 969.3,467.7 996.0,455.2 1036.0,441.0 1079.3,443.5 1133.5,416.0 1182.7,436.0 1191.0,431.8 1236.0,450.2 1229.3,454.3 1285.2,480.2 1236.0,514.3 1219.3,526.8 1226.8,531.8 1211.0,541.8 1202.7,539.3 1177.7,554.3 1069.0,499.0 1047.3,507.5 1039.8,501.0 1024.8,509.8 991.0,491.6 956.0,511.0 832.7,576.0 751.0,517.7 771.0,506.8 805.2,491.0 794.3,478.5 792.7,475.2" fill="#22160a" opacity="0.72" filter="url(#b7)"/></g></g><g mask="url(#mLt)"><g clip-path="url(#cF1)"><polygon points="747.0,436.7 820.3,406.7 827.0,404.6 833.7,403.7 848.7,403.7 855.0,405.2 860.3,407.5 877.0,416.7 892.0,425.8 897.0,427.5 917.0,425.0 923.7,441.7 940.3,449.2 945.3,447.5 970.3,461.7 997.0,449.2 1037.0,435.0 1080.3,437.5 1134.5,410.0 1183.7,430.0 1192.0,425.8 1237.0,444.2 1230.3,448.3 1286.2,474.2 1237.0,508.3 1220.3,520.8 1227.8,525.8 1212.0,535.8 1203.7,533.3 1178.7,548.3 1070.0,493.0 1048.3,501.5 1040.8,495.0 1025.8,503.8 992.0,485.6 957.0,505.0 833.7,570.0 752.0,511.7 772.0,500.8 806.2,485.0 795.3,472.5 793.7,469.2" fill="#22160a" opacity="0.5" filter="url(#b5)"/></g></g><polygon points="976.0,541.0 982.5,549.0 982.5,555.0 976.0,547.0" fill="#a48f60" /><polygon points="982.5,549.0 991.3,553.3 991.3,559.3 982.5,555.0" fill="#a48f60" /><polygon points="991.3,553.3 1007.5,545.5 1007.5,551.5 991.3,559.3" fill="#a48f60" /><polygon points="1047.5,545.3 1063.8,554.0 1063.8,560.0 1047.5,551.3" fill="#a48f60" /><polygon points="1063.8,554.0 1081.3,545.5 1081.3,551.5 1063.8,560.0" fill="#a48f60" /><polygon points="750.0,426.7 823.3,396.7 830.0,394.6 836.7,393.7 851.7,393.7 858.0,395.2 863.3,397.5 880.0,406.7 895.0,415.8 900.0,417.5 920.0,415.0 926.7,431.7 943.3,439.2 948.3,437.5 973.3,451.7 1000.0,439.2 1040.0,425.0 1083.3,427.5 1137.5,400.0 1186.7,420.0 1195.0,415.8 1240.0,434.2 1233.3,438.3 1289.2,464.2 1240.0,498.3 1223.3,510.8 1230.8,515.8 1215.0,525.8 1206.7,523.3 1181.7,538.3 1073.0,483.0 1051.3,491.5 1043.8,485.0 1028.8,493.8 995.0,475.6 960.0,495.0 836.7,560.0 755.0,501.7 775.0,490.8 809.2,475.0 798.3,462.5 796.7,459.2" fill="#967c57"  stroke="#967c57" stroke-width="1"/><polygon points="855.5,421.0 880.0,407.5 895.0,416.5 900.0,418.2 920.0,415.8 926.7,432.0 943.3,439.5 948.3,438.0 952.0,440.5 912.0,463.5 905.0,464.0 883.0,452.5 884.5,449.5 870.0,441.5 871.0,435.0" fill="#565a4e" /><g clip-path="url(#cF2)"><polygon points="938.0,424.0 974.7,406.5 975.5,402.3 996.3,393.2 1029.7,407.3 1030.5,412.3 1085.5,439.8 1066.3,448.2 1043.8,438.2 1028.0,445.7 1010.5,438.2 988.8,448.2" fill="#22160a" opacity="0.35" filter="url(#b4)"/></g><polygon points="1000.0,440.2 1013.3,436.2 1030.0,443.6 1046.7,436.2 1058.3,440.2 1031.7,455.5" fill="#ebebeb" stroke="#0ceefa" stroke-width="2.4" stroke-linejoin="round"/><polygon points="711.7,451.8 735.0,442.7 771.7,468.5 749.2,479.3" fill="#cfd3da" /><polygon points="711.7,445.8 735.0,436.7 735.0,442.7 711.7,451.8" fill="#e3e5e9" stroke="#e3e5e9" stroke-width=".6"/><polygon points="735.0,436.7 771.7,462.5 771.7,468.5 735.0,442.7" fill="#cfd3da" stroke="#cfd3da" stroke-width=".6"/><polygon points="771.7,462.5 749.2,473.3 749.2,479.3 771.7,468.5" fill="#e3e5e9" stroke="#e3e5e9" stroke-width=".6"/><polygon points="749.2,473.3 711.7,445.8 711.7,451.8 749.2,479.3" fill="#cfd3da" stroke="#cfd3da" stroke-width=".6"/><polygon points="711.7,445.8 735.0,436.7 771.7,462.5 749.2,473.3" fill="#947a55"  stroke="#947a55" stroke-width="1"/><polygon points="940.0,420.2 976.7,402.7 977.5,398.5 998.3,389.4 1031.7,403.5 1032.5,408.5 1087.5,436.0 1068.3,444.4 1045.8,434.4 1030.0,441.9 1012.5,434.4 990.8,444.4" fill="#cfd3da" /><polygon points="940.0,415.0 976.7,397.5 976.7,402.7 940.0,420.2" fill="#e3e5e9" stroke="#e3e5e9" stroke-width=".6"/><polygon points="976.7,397.5 977.5,393.3 977.5,398.5 976.7,402.7" fill="#e3e5e9" stroke="#e3e5e9" stroke-width=".6"/><polygon points="977.5,393.3 998.3,384.2 998.3,389.4 977.5,398.5" fill="#e3e5e9" stroke="#e3e5e9" stroke-width=".6"/><polygon points="998.3,384.2 1031.7,398.3 1031.7,403.5 998.3,389.4" fill="#cfd3da" stroke="#cfd3da" stroke-width=".6"/><polygon points="1031.7,398.3 1032.5,403.3 1032.5,408.5 1031.7,403.5" fill="#cfd3da" stroke="#cfd3da" stroke-width=".6"/><polygon points="1032.5,403.3 1087.5,430.8 1087.5,436.0 1032.5,408.5" fill="#cfd3da" stroke="#cfd3da" stroke-width=".6"/><polygon points="1087.5,430.8 1068.3,439.2 1068.3,444.4 1087.5,436.0" fill="#e3e5e9" stroke="#e3e5e9" stroke-width=".6"/><polygon points="1068.3,439.2 1045.8,429.2 1045.8,434.4 1068.3,444.4" fill="#cfd3da" stroke="#cfd3da" stroke-width=".6"/><polygon points="1045.8,429.2 1030.0,436.7 1030.0,441.9 1045.8,434.4" fill="#e3e5e9" stroke="#e3e5e9" stroke-width=".6"/><polygon points="1030.0,436.7 1012.5,429.2 1012.5,434.4 1030.0,441.9" fill="#cfd3da" stroke="#cfd3da" stroke-width=".6"/><polygon points="1012.5,429.2 990.8,439.2 990.8,444.4 1012.5,434.4" fill="#e3e5e9" stroke="#e3e5e9" stroke-width=".6"/><polygon points="990.8,439.2 940.0,415.0 940.0,420.2 990.8,444.4" fill="#cfd3da" stroke="#cfd3da" stroke-width=".6"/><polygon points="940.0,415.0 976.7,397.5 977.5,393.3 998.3,384.2 1031.7,398.3 1032.5,403.3 1087.5,430.8 1068.3,439.2 1045.8,429.2 1030.0,436.7 1012.5,429.2 990.8,439.2" fill="#94795a"  stroke="#94795a" stroke-width="1"/><polygon points="971.7,371.8 1030.0,347.7 1091.7,373.5 1074.2,381.0 1046.7,370.2 1030.0,377.2 1014.2,370.2 988.3,380.2" fill="#cfd3da" /><polygon points="971.7,365.8 1030.0,341.7 1030.0,347.7 971.7,371.8" fill="#e3e5e9" stroke="#e3e5e9" stroke-width=".6"/><polygon points="1030.0,341.7 1091.7,367.5 1091.7,373.5 1030.0,347.7" fill="#cfd3da" stroke="#cfd3da" stroke-width=".6"/><polygon points="1091.7,367.5 1074.2,375.0 1074.2,381.0 1091.7,373.5" fill="#e3e5e9" stroke="#e3e5e9" stroke-width=".6"/><polygon points="1074.2,375.0 1046.7,364.2 1046.7,370.2 1074.2,381.0" fill="#cfd3da" stroke="#cfd3da" stroke-width=".6"/><polygon points="1046.7,364.2 1030.0,371.2 1030.0,377.2 1046.7,370.2" fill="#e3e5e9" stroke="#e3e5e9" stroke-width=".6"/><polygon points="1030.0,371.2 1014.2,364.2 1014.2,370.2 1030.0,377.2" fill="#cfd3da" stroke="#cfd3da" stroke-width=".6"/><polygon points="1014.2,364.2 988.3,374.2 988.3,380.2 1014.2,370.2" fill="#e3e5e9" stroke="#e3e5e9" stroke-width=".6"/><polygon points="988.3,374.2 971.7,365.8 971.7,371.8 988.3,380.2" fill="#cfd3da" stroke="#cfd3da" stroke-width=".6"/><polygon points="971.7,365.8 1030.0,341.7 1091.7,367.5 1074.2,375.0 1046.7,364.2 1030.0,371.2 1014.2,364.2 988.3,374.2" fill="#967b57"  stroke="#967b57" stroke-width="1"/></g>
<path d="M682.2,509.0L681.8,515.5L684.5,520.0L717.5,546.5L719.0,545.0L719.0,543.5L715.2,537.0L752.4,567.3L752.3,567.5L743.3,563.3L731.7,569.2L745.0,581.7L745.8,582.1L729.0,592.0L741.7,607.0L762.0,598.5L845.8,667.5L799.2,696.7L859.2,754.2L898.0,726.5L903.5,721.0L906.3,714.5L905.0,708.0L901.0,702.5L879.2,685.8L895.8,676.0L896.6,672.4L875.3,654.8L876.7,654.2L900.8,671.7L996.7,610.8L1004.0,614.5L1013.0,617.0L1023.0,617.8L1033.0,617.8L1041.0,617.0L1048.3,615.0L1235.0,735.0L1325.0,653.3L1329.5,647.0L1332.5,638.0L1331.0,629.0L1326.5,619.0L1320.0,611.0L1311.7,605.0L1260.0,580.0L1256.7,581.7L1253.3,578.3L1266.7,565.8L1241.1,553.8L1276.7,521.8L1276.7,515.8L1240.0,498.3L1289.2,464.2L1233.3,438.3L1240.0,434.2L1195.0,415.8L1186.7,420.0L1137.5,400.0L1083.3,427.5L1080.6,427.3L1032.5,403.3L1031.7,398.3L998.3,384.2L977.5,393.3L976.7,397.5L940.0,415.0L940.0,420.2L989.9,443.9L973.3,451.7L948.3,437.5L943.3,439.2L926.7,431.7L920.0,415.0L900.0,417.5L895.0,415.8L880.0,406.7L863.3,397.5L858.0,395.2L851.7,393.7L836.7,393.7L830.0,394.6L823.3,396.7L750.0,426.7L796.7,459.2L776.7,469.2L771.7,466.0L771.7,462.5L735.0,436.7L711.7,445.8L711.7,451.8L721.8,459.2L688.3,475.0L688.3,479.5L708.3,494.1L686.0,505.5ZM997.5,491.3L975.0,502.5L961.7,494.1L995.0,475.6L1028.8,493.8L1043.8,485.0L1051.0,491.2L1028.8,508.8ZM1009.5,550.3L1014.4,547.3L1027.5,553.5L1038.8,546.6L1043.0,548.9L1028.3,558.4ZM971.7,365.8L971.7,371.8L988.3,380.2L1014.2,370.2L1030.0,377.2L1046.7,370.2L1074.2,381.0L1091.7,373.5L1091.7,367.5L1030.0,341.7Z" fill="none" stroke="#0ceefa" stroke-width="2.8" stroke-linejoin="round"/>
<polygon points="757.0,489.6 767.5,485.8 775.8,490.0 762.5,496.3" fill="#e9e9e9" stroke="#0ceefa" stroke-width="2"/><polygon points="972.0,546.6 977.0,545.0 981.5,548.0 976.0,550.3" fill="#e9e9e9" stroke="#0ceefa" stroke-width="1.8"/><polygon points="1008.3,545.3 1015.0,541.2 1026.7,547.8 1038.3,541.2 1048.0,546.7 1028.3,557.3" fill="#ececec" stroke="#0ceefa" stroke-width="2.6" stroke-linejoin="round"/>
</svg>
<div class="tbg" style="left:143px;width:160px"><svg width="160" height="40" viewBox="0 0 160 40"><g transform="translate(11.2,11.9) scale(.70)"><path d="M13.5 5.5c1.1 0 2-.9 2-2s-.9-2-2-2-2 .9-2 2 .9 2 2 2zM9.8 8.9L7 23h2.1l1.8-8 2.1 2v6h2v-7.5l-2.1-2 .6-3C14.8 12 16.8 13 19 13v-2c-1.9 0-3.5-1-4.3-2.4l-1-1.6c-.4-.6-1-1-1.7-1-.3 0-.5.1-.8.1L6 8.3V13h2V9.6l1.8-.7" fill="#858790"/></g><rect x="51" y="12.8" width="12.8" height="15" rx="2.6" fill="#858790"/><path d="M63.3 18.2L69 14.6V26L63.3 22.4Z" fill="#858790"/><path d="M53.6 25.2L57.4 15.4L61.2 25.2M55 22H59.8" fill="none" stroke="#fff" stroke-width="1.7" stroke-linejoin="round" stroke-linecap="round"/><path d="M91.0,16.2V15.0Q91.0,11.0 95.0,11.0H96.2M103.8,11.0H105.0Q109.0,11.0 109.0,15.0V16.2M109.0,23.400000000000002V24.6Q109.0,28.6 105.0,28.6H103.8M96.2,28.6H95.0Q91.0,28.6 91.0,24.6V23.400000000000002" fill="none" stroke="#858790" stroke-width="1.7" stroke-linecap="round"/><path d="M100 15.2L104.2 17.4V22.2L100 24.6L95.8 22.2V17.4Z" fill="#858790"/><path d="M95.8 17.4L100 19.7L104.2 17.4M100 19.7V24.6" fill="none" stroke="#fff" stroke-width=".8" opacity=".75"/><rect x="131" y="11.9" width="18" height="16.3" rx=".8" fill="none" stroke="#858790" stroke-width="1.7"/><path d="M134.3 18V15.2H137.6M142.4 15.2H145.7V18M145.7 22.2V25H142.4M137.6 25H134.3V22.2" fill="none" stroke="#858790" stroke-width="1.6"/></svg></div>
<div class="tbg" style="left:311px;width:240px"><svg width="240" height="40" viewBox="0 0 240 40"><path d="M15.6 11.8V26.4L19.2 23.3L21.8 28.8L24.4 27.6L21.9 22.3L26.4 22Z" fill="#0f8fd3"/><path d="M55.3,16.2Q60,10.799999999999999 64.7,16.2Q60,21.6 55.3,16.2Z" fill="none" stroke="#c8c9cf" stroke-width="1.0"/><circle cx="60" cy="16.2" r="1.7" fill="#c8c9cf"/><path d="M50.199999999999996,23.4Q54.9,18.0 59.6,23.4Q54.9,28.799999999999997 50.199999999999996,23.4Z" fill="none" stroke="#c8c9cf" stroke-width="1.0"/><circle cx="54.9" cy="23.4" r="1.7" fill="#c8c9cf"/><path d="M60.39999999999999,23.4Q65.1,18.0 69.8,23.4Q65.1,28.799999999999997 60.39999999999999,23.4Z" fill="none" stroke="#c8c9cf" stroke-width="1.0"/><circle cx="65.1" cy="23.4" r="1.7" fill="#c8c9cf"/><path d="M91.0,16.2V15.0Q91.0,11.0 95.0,11.0H96.2M103.8,11.0H105.0Q109.0,11.0 109.0,15.0V16.2M109.0,23.400000000000002V24.6Q109.0,28.6 105.0,28.6H103.8M96.2,28.6H95.0Q91.0,28.6 91.0,24.6V23.400000000000002" fill="none" stroke="#c8c9cf" stroke-width="1.7" stroke-linecap="round"/><path d="M93.8 19.8Q100 13.4 106.2 19.8Q100 26.2 93.8 19.8Z" fill="none" stroke="#c8c9cf" stroke-width="1.2"/><circle cx="100" cy="19.8" r="2.5" fill="#c8c9cf"/><path d="M93.6 13.2L106.6 26.6" stroke="#fff" stroke-width="3"/><path d="M93.9 13.6L106.3 26.2" stroke="#c8c9cf" stroke-width="1.3" stroke-linecap="round"/><path d="M131.0,16.2V15.0Q131.0,11.0 135.0,11.0H136.2M143.8,11.0H145.0Q149.0,11.0 149.0,15.0V16.2M149.0,23.400000000000002V24.6Q149.0,28.6 145.0,28.6H143.8M136.2,28.6H135.0Q131.0,28.6 131.0,24.6V23.400000000000002" fill="none" stroke="#c8c9cf" stroke-width="1.7" stroke-linecap="round"/><circle cx="140" cy="20" r="3.1" fill="#c8c9cf"/><path d="M171,16.4V15Q171,11 175,11H176.4M184.0,11H185.4Q189.4,11 189.4,15V15.399999999999999M176.4,29H175Q171,29 171,25V23.6" fill="none" stroke="#0f8fd3" stroke-width="1.8" stroke-linecap="round"/><circle cx="179.3" cy="20" r="2.9" fill="#0f8fd3"/><path d="M182.2 29.2L185.9 20.2L189.6 29.2M183.5 26.3H188.3" fill="none" stroke="#0f8fd3" stroke-width="1.7" stroke-linejoin="round" stroke-linecap="round"/><path d="M210.8 14.6H229.2" stroke="#858790" stroke-width="1.8" stroke-linecap="round"/><circle cx="223.6" cy="14.6" r="2.3" fill="#fff" stroke="#858790" stroke-width="1.5"/><path d="M210.8 20H229.2" stroke="#858790" stroke-width="1.8" stroke-linecap="round"/><circle cx="216.6" cy="20" r="2.3" fill="#fff" stroke="#858790" stroke-width="1.5"/><path d="M210.8 25.4H229.2" stroke="#858790" stroke-width="1.8" stroke-linecap="round"/><circle cx="223.6" cy="25.4" r="2.3" fill="#fff" stroke="#858790" stroke-width="1.5"/></svg></div>
<div class="tbg" style="left:559px;width:40px"><svg width="40" height="40" viewBox="0 0 40 40"><path d="M20 10.2L29 14.7V25.2L21.2 29.5L11 24.2V14.6Z M11 14.6L21.2 19.4L29 14.7 M21.2 19.4V29.5" fill="none" stroke="#858790" stroke-width="1.5" stroke-linejoin="round"/><path d="M21.2 19.4L29 14.7V25.2L21.2 29.5Z" fill="#858790"/></svg></div>
<div class="tbg" style="left:607px;width:40px"><svg width="40" height="40" viewBox="0 0 40 40"><circle cx="19.8" cy="19.6" r="7.4" fill="none" stroke="#6b6e7a" stroke-width=".9"/><path d="M19.8 18.4V23.6" stroke="#6b6e7a" stroke-width="1.1"/><circle cx="19.8" cy="16" r=".8" fill="#6b6e7a"/></svg></div>

</div></div><div class="split" style="left:1391px"></div><div id="right">
<div class="tab tabL" style="left:9px;width:86px"><span style="left:8px">Parameters</span></div>
<div class="tabline" style="left:0;width:527px;background:#b9d0ec"></div>
<div id="params">
<div class="phead"><span style="left:4px">Element ID</span><b></b><span style="left:252px">178222</span></div>
<div class="sec" style="top:23px"><i class="tri"></i><span>Instance Parameters</span></div>
<div class="pr odd" style="top:51px"><span class="g">Constraints</span></div>
<div class="pr even" style="top:73px"><span class="k">Height Offset From Level</span><span class="v">0' - 0"</span></div>
<div class="pr odd" style="top:95px"><span class="k">Level</span><span class="v">00 Ground Flr</span></div>
<div class="pr even" style="top:117px"><span class="k">Related to Mass</span><span class="v">No</span></div>
<div class="pr odd" style="top:139px"><span class="k">Room Bounding</span><span class="v">Yes</span></div>
<div class="pr even" style="top:161px"><span class="g">Dimensions</span></div>
<div class="pr odd" style="top:183px"><span class="k">Area</span><span class="v">155 SF</span></div>
<div class="pr even" style="top:205px"><span class="k">Elevation at Bottom</span><span class="v">-0' - 11 1/4"</span></div>
<div class="pr odd" style="top:227px"><span class="k">Elevation at Top</span><span class="v">0' - 0"</span></div>
<div class="pr even" style="top:249px"><span class="k">Perimeter</span><span class="v">54' - 3 17/32"</span></div>
<div class="pr odd" style="top:271px"><span class="k">Slope</span><span class="v">0</span></div>
<div class="pr even" style="top:293px"><span class="k">Thickness</span><span class="v">0' - 11 1/4"</span></div>
<div class="pr odd" style="top:315px"><span class="k">Volume</span><span class="v">145.07 CF</span></div>
<div class="pr even" style="top:337px"><span class="g">IFC Parameters</span></div>
<div class="pr odd" style="top:359px"><span class="k">Export to IFC</span><span class="v">By Type</span></div>
<div class="pr even" style="top:381px"><span class="k">Export to IFC As</span><span class="v"></span></div>
<div class="pr odd" style="top:403px"><span class="k">IFC Predefined Type</span><span class="v"></span></div>
<div class="pr even" style="top:425px"><span class="k">IfcGUID</span><span class="v" style="letter-spacing:-.38px">37VKYdyB54Pxq68uIMaW53</span></div>
<div class="pr odd" style="top:447px"><span class="g">Identity Data</span></div>
<div class="pr even" style="top:469px"><span class="k">Comments</span><span class="v"></span></div>
<div class="pr odd" style="top:491px"><span class="k">Has Association</span><span class="v">No</span></div>
<div class="pr even" style="top:513px"><span class="k">Image</span><span class="v">-1</span></div>
<div class="pr odd" style="top:535px"><span class="k">Mark</span><span class="v"></span></div>
<div class="pr even" style="top:557px"><span class="g">Phasing</span></div>
<div class="pr odd" style="top:579px"><span class="k">Phase Created</span><span class="v">New Construction</span></div>
<div class="pr even" style="top:601px"><span class="k">Phase Demolished</span><span class="v">None</span></div>
<div class="pr odd" style="top:623px"><span class="k">Structural</span><span class="v">No</span></div>
<div class="sec" style="top:647px"><i class="tri"></i><span>Type Parameters</span></div>
<div class="pr odd" style="top:675px"><span class="g">Analytical Properties</span></div>
<div class="pr even" style="top:697px"><span class="k">Absorptance</span><span class="v">0.1</span></div>
<div class="pr odd" style="top:719px"><span class="k">Heat Transfer Coefficient (U)</span><span class="v">0</span></div>
<div class="pr even" style="top:741px"><span class="k">Roughness</span><span class="v">1</span></div>
<div class="pr odd" style="top:763px"><span class="k">Thermal Mass</span><span class="v">0</span></div>
<div class="pr even" style="top:785px"><span class="k">Thermal Resistance (R)</span><span class="v">0</span></div>
<div class="pr odd" style="top:807px"><span class="g">Construction</span></div>
<div class="pr even" style="top:829px"><span class="k">Default Thickness</span><span class="v">0' - 11 1/4"</span></div>
<div class="pr odd" style="top:851px"><span class="k">Function</span><span class="v">Interior</span></div>
<div class="pr even" style="top:873px"><span class="k">Structure</span><span class="v"></span></div>
<div class="pr odd" style="top:895px"><span class="g">Graphics</span></div>
<div class="pr even" style="top:917px"><span class="k">Coarse Scale Fill Color</span><span class="v">0</span></div>
<div class="pr odd" style="top:939px"><span class="k">Coarse Scale Fill Pattern</span><span class="v">-1</span></div>
<div class="pr even" style="top:961px"><span class="g">IFC Parameters</span></div>
<div class="sbar"><div class="thumb"></div></div>
</div></div><div id="status"><span style="left:8px">Ready | UI: 11 ms</span><span style="left:158px;letter-spacing:-.5px">UI FPS: 46.5</span><span style="left:258px;letter-spacing:-.35px">Render FPS: 118</span><span style="right:8px">License valid until 2026-11-20 | v1.3.7.0</span></div>
</body></html>
